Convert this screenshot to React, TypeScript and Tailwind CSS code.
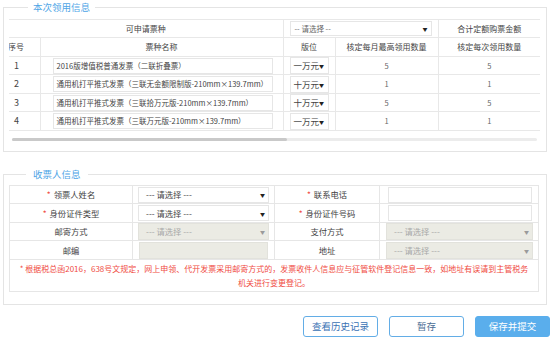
import React from 'react';

interface BoxProps {
  text?: string;
  disabled?: boolean;
  arrow?: boolean;
  className?: string;
}

const Caret: React.FC<{ light?: boolean }> = ({ light }) => (
  <span
    className={`text-[5px] leading-none ${
      light ? 'text-[#9a9a9a]' : 'text-[#222]'
    }`}
  >
    ▼
  </span>
);

const Box: React.FC<BoxProps> = ({ text, disabled, arrow, className }) => {
  return (
    <div
      className={`flex items-center justify-between border whitespace-nowrap overflow-hidden ${
        disabled
          ? 'bg-[#ebebe4] border-[#e2e2dc] text-[#a8a8a8]'
          : 'bg-white border-[#e6e6e6] text-[#444]'
      } ${className ?? ''}`}
    >
      <span>{text}</span>
      {arrow && <Caret light={disabled} />}
    </div>
  );
};

const rows = [
  {
    no: 1,
    name: '2016版增值税普通发票（二联折叠票）',
    ver: '一万元',
    month: 5,
    each: 5,
  },
  {
    no: 2,
    name: '通用机打平推式发票（三联无金额限制版-210mm×139.7mm）',
    ver: '十万元',
    month: 1,
    each: 1,
  },
  {
    no: 3,
    name: '通用机打平推式发票（三联拾万元版-210mm×139.7mm）',
    ver: '十万元',
    month: 5,
    each: 5,
  },
  {
    no: 4,
    name: '通用机打平推式发票（三联万元版-210mm×139.7mm）',
    ver: '一万元',
    month: 1,
    each: 1,
  },
];

const Label: React.FC<{ text: string; required?: boolean }> = ({
  text,
  required,
}) => (
  <td className="border border-[#e6e6e6] text-center text-[8.3px] text-[#444]">
    {required && <span className="text-[#f04b3f] mr-[3px]">*</span>}
    {text}
  </td>
);

export default function App() {
  return (
    <div className="w-[553px] h-[340px] bg-white overflow-hidden font-['Microsoft_YaHei','Noto_Sans_CJK_SC',sans-serif] text-[#555]">
      <fieldset className="ml-[3px] w-[544px] border border-[#e4e4e4] px-[5px] pt-[5px] pb-[10px]">
        <legend className="ml-[19px] px-[5px] text-[9.5px] leading-[14px] text-[#4ea5e6]">
          本次领用信息
        </legend>
        <table className="w-[531px] table-fixed border-collapse text-[8px]">
          <colgroup>
            <col className="w-[31px]" />
            <col className="w-[243px]" />
            <col className="w-[52px]" />
            <col className="w-[103px]" />
            <col className="w-[102px]" />
          </colgroup>
          <tbody>
            <tr className="h-[18px] border-t border-b border-[#e8e8e8]">
              <td colSpan={2} className="text-center text-[8px] text-[#444]">
                可申请票种
              </td>
              <td colSpan={2} className="border-l border-r border-[#e8e8e8] px-[6px]">
                <Box text="-- 请选择 --" arrow className="h-[15px] pl-[4px] pr-[3px] text-[7.5px] text-[#666]" />
              </td>
              <td className="text-center text-[8px] text-[#444]">合计定额购票金额</td>
            </tr>
            <tr className="h-[19px] border-b border-[#e8e8e8] text-[#444]">
              <td className="border-r border-[#e8e8e8] overflow-hidden whitespace-nowrap">
                <span className="ml-[-1px]">序号</span>
              </td>
              <td className="border-r border-[#e8e8e8] text-center">票种名称</td>
              <td className="border-r border-[#e8e8e8] text-center">版位</td>
              <td className="border-r border-[#e8e8e8] text-center">核定每月最高领用数量</td>
              <td className="text-center">核定每次领用数量</td>
            </tr>
            {rows.map((r, i) => (
              <tr
                key={r.no}
                className={`${i % 2 === 1 ? 'h-[19px]' : 'h-[18px]'} border-b border-[#e8e8e8]`}
              >
                <td className="border-r border-[#e8e8e8] pl-[5px] text-[9px] text-[#444]">
                  {r.no}
                </td>
                <td className="border-r border-[#e8e8e8] pl-[12px] pr-[10px]">
                  <Box text={r.name} className="h-[16px] pl-[3px] text-[7.5px] text-[#444]" />
                </td>
                <td className="border-r border-[#e8e8e8] px-[6px]">
                  <Box
                    text={r.ver}
                    arrow
                    className="h-[17px] pl-[3px] pr-[4px] text-[8.5px] text-[#333]"
                  />
                </td>
                <td className="border-r border-[#e8e8e8] text-center text-[7.5px] text-[#666]">
                  {r.month}
                </td>
                <td className="text-center text-[7.5px] text-[#666]">{r.each}</td>
              </tr>
            ))}
          </tbody>
        </table>
        <div className="ml-[3px] mt-[7px] w-[525px] h-[3px] rounded-full bg-[#ececec]">
          <div className="w-[275px] h-[3px] rounded-full bg-[#c9c9c9]" />
        </div>
      </fieldset>

      <fieldset className="ml-[3px] mt-[15px] w-[544px] border border-[#e4e4e4] px-[5px] pt-[4px] pb-[12px]">
        <legend className="ml-[17px] px-[7px] text-[9.5px] leading-[14px] text-[#4ea5e6]">
          收票人信息
        </legend>
        <table className="w-[530px] table-fixed border-collapse">
          <colgroup>
            <col className="w-[123px]" />
            <col className="w-[142px]" />
            <col className="w-[105px]" />
            <col className="w-[159px]" />
          </colgroup>
          <tbody>
            <tr className="h-[18px]">
              <Label text="领票人姓名" required />
              <td className="border border-[#e6e6e6] px-[5px]">
                <Box text="--- 请选择 ---" arrow className="h-[16px] pl-[7px] pr-[3px] text-[8.3px]" />
              </td>
              <Label text="联系电话" required />
              <td className="border border-[#e6e6e6] pl-[8px] pr-[6px]">
                <Box className="h-[16px]" />
              </td>
            </tr>
            <tr className="h-[19px]">
              <Label text="身份证件类型" required />
              <td className="border border-[#e6e6e6] px-[5px]">
                <Box text="--- 请选择 ---" arrow className="h-[16px] pl-[7px] pr-[3px] text-[8.3px]" />
              </td>
              <Label text="身份证件号码" required />
              <td className="border border-[#e6e6e6] pl-[8px] pr-[6px]">
                <Box className="h-[16px]" />
              </td>
            </tr>
            <tr className="h-[18px]">
              <Label text="邮寄方式" />
              <td className="border border-[#e6e6e6] px-[5px]">
                <Box text="--- 请选择 ---" arrow disabled className="h-[17px] pl-[7px] pr-[3px] text-[8.3px]" />
              </td>
              <Label text="支付方式" />
              <td className="border border-[#e6e6e6] pl-[6px] pr-[5px]">
                <Box text="--- 请选择 ---" arrow disabled className="h-[17px] pl-[7px] pr-[3px] text-[8.3px]" />
              </td>
            </tr>
            <tr className="h-[19px]">
              <Label text="邮编" />
              <td className="border border-[#e6e6e6] pl-[6px] pr-[6px]">
                <Box disabled className="h-[17px]" />
              </td>
              <Label text="地址" />
              <td className="border border-[#e6e6e6] pl-[6px] pr-[5px]">
                <Box text="--- 请选择 ---" arrow disabled className="h-[17px] pl-[7px] pr-[3px] text-[8.3px]" />
              </td>
            </tr>
            <tr className="h-[32px]">
              <td
                colSpan={4}
                className="border border-[#e6e6e6] pt-[2px] text-center text-[8px] leading-[14.3px] text-[#f04b3f] align-top"
              >
                * 根据税总函2016，638号文规定，网上申领、代开发票采用邮寄方式的，发票收件人信息应与征管软件登记信息一致，如地址有误请到主管税务
                <br />
                机关进行变更登记。
              </td>
            </tr>
          </tbody>
        </table>
      </fieldset>

      <div className="mt-[11px] pr-[3px] flex justify-end gap-[11px] text-[9.5px]">
        <button className="w-[75px] h-[21px] rounded-[3px] border border-[#63ade6] bg-white text-[#3a72b4]">
          查看历史记录
        </button>
        <button className="w-[75px] h-[21px] rounded-[3px] border border-[#63ade6] bg-white text-[#4a6d95]">
          暂存
        </button>
        <button className="w-[75px] h-[21px] rounded-[3px] border border-[#5aaeec] bg-[#5aaeec] text-white">
          保存并提交
        </button>
      </div>
    </div>
  );
}
